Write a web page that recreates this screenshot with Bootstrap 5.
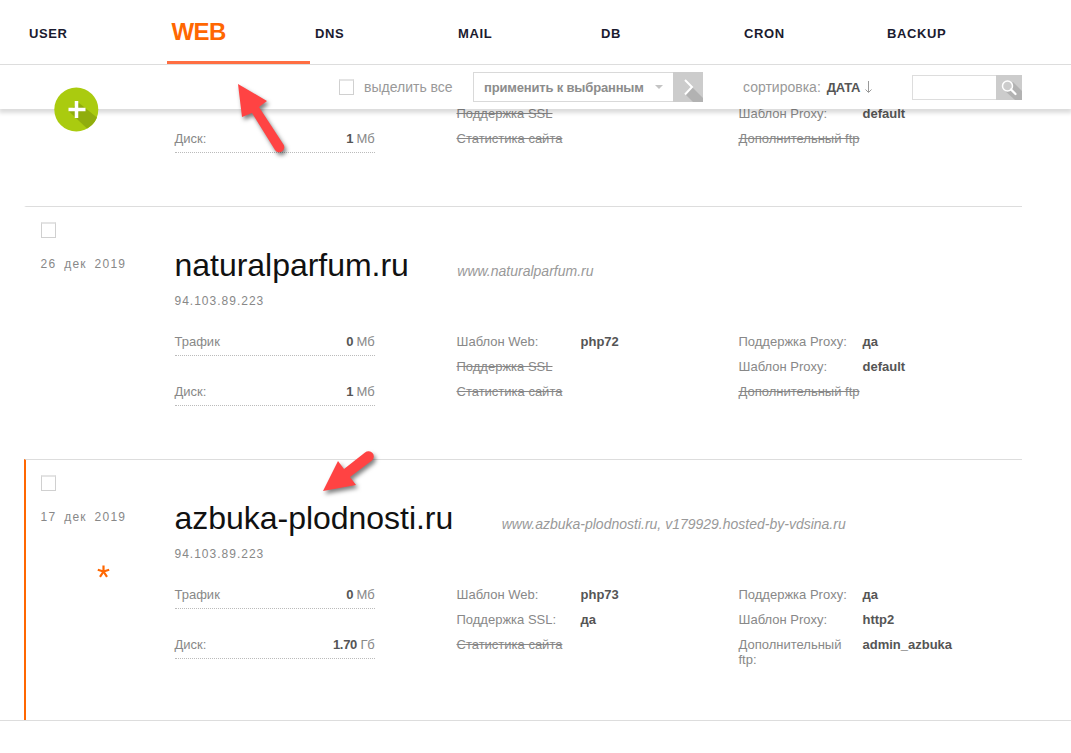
<!DOCTYPE html>
<html lang="ru">
<head>
<meta charset="utf-8">
<meta name="viewport" content="width=device-width, initial-scale=1">
<title>WEB</title>
<link href="https://cdn.jsdelivr.net/npm/bootstrap@5.3.0/dist/css/bootstrap.min.css" rel="stylesheet">
<style>
body{font-family:"Liberation Sans",Arial,sans-serif;font-size:13px;line-height:15px;color:#888;background:#fff;width:1071px;height:753px;overflow:hidden}
.top-bar{height:109px;box-shadow:0 3px 4px 1px rgba(0,0,0,.14);z-index:5}
.main-nav{height:65px;border-bottom:1px solid #ddd;padding-left:24px}
.main-nav .nav-link{width:143px;height:64px;padding:5px 0 0 5px;color:#1b1b2f;font-weight:700;font-size:13px;letter-spacing:.6px;border-bottom:3px solid transparent}
.main-nav .nav-link.active{color:#ff6701;font-size:24px;letter-spacing:-.6px;padding:2px 0 0 4.500px;border-bottom-color:#ff6e42}
.tools{height:44px;font-size:14px;color:#999;padding-left:339px}
.box{width:15px;height:16px;border:1px solid #d0d0d0;border-top:2px solid #e4e4e4;flex:none}
.apply{width:200px;height:30px;border:1px solid #d9d9d9;border-right:0;padding:0 10px;color:#8c8c8c;font-weight:700;font-size:13px;margin-left:20px}
.apply span{letter-spacing:-.17px}
.find{width:84px;height:25px;border:1px solid #ddd;border-right:0;margin-left:39px}
.add{left:54px;top:87px;z-index:6}
.entry{margin-left:24px;width:998px;height:253px;border-top:1px solid #ddd;border-left:2px solid transparent;flex:none}
.entry.starred{height:261px;border-left-color:#ff6701}
.side{width:148.500px;padding:15px 0 0 15px;flex:none}
.stamp{font-size:12px;letter-spacing:1.25px;word-spacing:3.200px;margin-top:19px;margin-left:-.5px}
.star{margin:40px 0 0 56px}
.site{font-size:32px;line-height:36px;color:#111;letter-spacing:-.03px;margin-right:49px}
.alias{font-size:14px;line-height:16px;font-style:italic;color:#999;padding-top:16px;margin-left:-.5px}
.ip{font-size:12px;letter-spacing:1px;margin-top:11px}
.facts{margin-top:25px}
.usage{width:200px;margin-right:82px}
.usage>div{height:22px;border-bottom:1px dotted #bbb;margin-bottom:28px}
.usage b{letter-spacing:-.3px}
.usage span+span{letter-spacing:-.2px}
.info{width:282px}
.info>div{margin-bottom:10px}
.info .k{width:124px;padding-right:10px;flex:none}
.info s{white-space:nowrap}
b{color:#555}
.clip{height:97px;padding-left:174.500px}
.clip .facts{margin:-3px 0 0}
.clip .usage{padding-top:25px}
.foot{height:33px;border-top:1px solid #ddd}
.pointer{filter:drop-shadow(2px 3px 2px rgba(0,0,0,.5));z-index:10;left:0;top:0;pointer-events:none}
</style>
</head>
<body class="position-relative">
<header class="top-bar position-relative bg-white">
  <nav class="nav main-nav flex-nowrap">
    <a class="nav-link d-flex align-items-center">USER</a>
    <a class="nav-link active d-flex align-items-center">WEB</a>
    <a class="nav-link d-flex align-items-center">DNS</a>
    <a class="nav-link d-flex align-items-center">MAIL</a>
    <a class="nav-link d-flex align-items-center">DB</a>
    <a class="nav-link d-flex align-items-center">CRON</a>
    <a class="nav-link d-flex align-items-center">BACKUP</a>
  </nav>
  <div class="tools d-flex align-items-center text-nowrap">
    <div class="box"></div><span style="margin-left:10px;width:89px">выделить все</span>
    <div class="apply d-flex align-items-center justify-content-between"><span>применить к выбранным</span>
      <svg width="8" height="5"><path d="M0 0h8L4 4z" fill="#c4c4c4"/></svg></div>
    <svg width="30" height="30"><path fill="#ccc" d="M0 0h30v30H0z"/><path fill="#b2b2b2" d="M19 15l11 11v4H20l-8-8z"/><path d="M12 8l7 7-7 7.500" fill="none" stroke="#fff" stroke-width="2"/></svg>
    <span style="margin-left:40px">сортировка:</span><b style="margin-left:6px;font-size:13px;letter-spacing:-.3px">ДАТА</b>
    <svg width="9" height="13" style="margin-left:4px"><path d="M4.500 0v11M1.500 8.500l3 3 3-3" fill="none" stroke="#999"/></svg>
    <div class="find"></div>
    <svg width="26" height="25"><path fill="#ccc" d="M0 0h26v25H0z"/><path fill="#b2b2b2" d="M17 7l9 9v9h-7L8 15z"/><circle cx="11.500" cy="11" r="5" fill="#ccc" stroke="#fff" stroke-width="1.500"/><path d="M15 14.500l4.500 4.500" stroke="#fff" stroke-width="2.300" stroke-linecap="round"/></svg>
  </div>
</header>
<svg class="add position-absolute" width="45" height="45"><circle cx="22.300" cy="22.500" r="22" fill="#aacb0f"/><path d="M25 16l18 14.500a22 22 0 0 1-10 11L14.500 24z" fill="#90ad0d"/><path d="M22.500 14v17M14.500 22.500h17" stroke="#fff" stroke-width="3.500"/></svg>
<main>
  <div class="clip overflow-hidden">
    <div class="facts d-flex">
      <div class="usage"><div class="d-flex justify-content-between"><span>Диск:</span><span><b>1</b> Мб</span></div></div>
      <div class="info"><div><s>Поддержка SSL</s></div><div><s>Статистика сайта</s></div></div>
      <div class="info"><div class="d-flex"><span class="k">Шаблон Proxy:</span><b>default</b></div><div><s>Дополнительный ftp</s></div></div>
    </div>
  </div>
  <section class="entry d-flex">
    <div class="side"><div class="box"></div><div class="stamp">26 дек 2019</div></div>
    <div style="padding-top:40px">
      <div class="d-flex"><div class="site">naturalparfum.ru</div><div class="alias">www.naturalparfum.ru</div></div>
      <div class="ip">94.103.89.223</div>
      <div class="d-flex facts">
        <div class="usage"><div class="d-flex justify-content-between"><span>Трафик</span><span><b>0</b> Мб</span></div><div class="d-flex justify-content-between"><span>Диск:</span><span><b>1</b> Мб</span></div></div>
        <div class="info"><div class="d-flex"><span class="k">Шаблон Web:</span><b>php72</b></div><div><s>Поддержка SSL</s></div><div><s>Статистика сайта</s></div></div>
        <div class="info"><div class="d-flex"><span class="k">Поддержка Proxy:</span><b>да</b></div><div class="d-flex"><span class="k">Шаблон Proxy:</span><b>default</b></div><div><s>Дополнительный ftp</s></div></div>
      </div>
    </div>
  </section>
  <section class="entry starred d-flex">
    <div class="side"><div class="box"></div><div class="stamp">17 дек 2019</div>
      <svg class="star d-block" width="13" height="13"><path d="M6.500 6.500V.5M6.500 6.500L.8 4.700M6.500 6.500l5.700-1.800M6.500 6.500L3 11.800M6.500 6.500l3.500 5.300" stroke="#ff6701" stroke-width="2.200"/></svg></div>
    <div style="padding-top:40px">
      <div class="d-flex"><div class="site">azbuka-plodnosti.ru</div><div class="alias">www.azbuka-plodnosti.ru, v179929.hosted-by-vdsina.ru</div></div>
      <div class="ip">94.103.89.223</div>
      <div class="d-flex facts">
        <div class="usage"><div class="d-flex justify-content-between"><span>Трафик</span><span><b>0</b> Мб</span></div><div class="d-flex justify-content-between"><span>Диск:</span><span><b>1.70</b> Гб</span></div></div>
        <div class="info"><div class="d-flex"><span class="k">Шаблон Web:</span><b>php73</b></div><div class="d-flex"><span class="k">Поддержка SSL:</span><b>да</b></div><div><s>Статистика сайта</s></div></div>
        <div class="info"><div class="d-flex"><span class="k">Поддержка Proxy:</span><b>да</b></div><div class="d-flex"><span class="k">Шаблон Proxy:</span><b>http2</b></div><div class="d-flex"><span class="k">Дополнительный ftp:</span><b>admin_azbuka</b></div></div>
      </div>
    </div>
  </section>
</main>
<footer class="foot"></footer>
<svg class="pointer position-absolute" width="1071" height="753" fill="#ff4343"><path d="M238 84l29 17-8 6 24.500 37.500a5 5 0 0 1-8.500 5.500L252 113l-10 4z"/><path d="M323 491l15-30 6 8 21-16.500a5 5 0 0 1 7 8L350 477l6 8z"/></svg>
<script src="https://cdn.jsdelivr.net/npm/bootstrap@5.3.0/dist/js/bootstrap.bundle.min.js"></script>
</body>
</html>
